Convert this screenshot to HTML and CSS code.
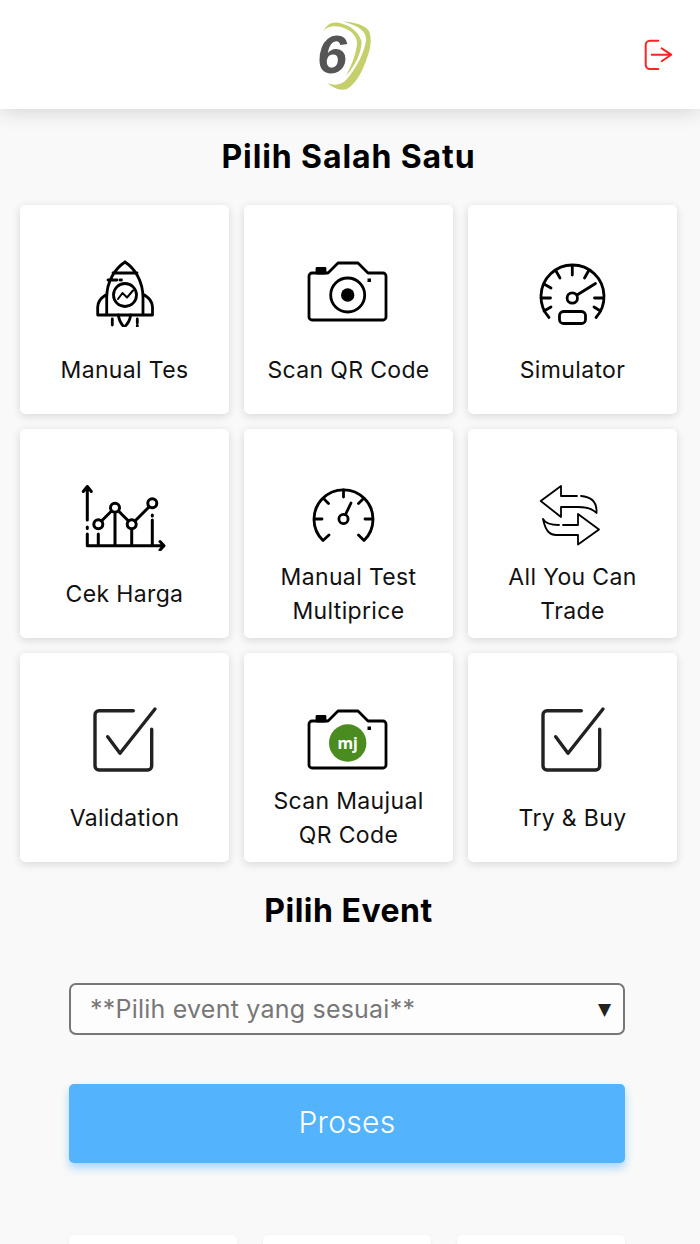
FILE: index.html
```html
<!DOCTYPE html>
<html lang="id">
<head>
<meta charset="utf-8">
<title>Pilih Salah Satu</title>
<link rel="stylesheet" href="styles.css">
</head>
<body>
<div class="app">
  <header class="topbar">
    <div class="logo">
      <svg class="logo-swoosh" viewBox="280 0 140 109" width="140" height="109">
        <path class="swoosh" d="M343 21.5C356 22 366 26 369 31C372 38 371 48 367 58C363 70 357 83 347 89C340 91 333 88 327.500 83C335 86 342 85 347 79C356 68 365 52 366 40C366.500 32 360 26 343 21.500Z"/>
        <path class="swoosh" d="M323 32C326 25 331 22 337 22.500C350 25 358 31 361.500 41C362 52 355 66 346 76C351 66 356 55 357 44C357.500 36 351 30 341 27C332 25 326 27 323 32Z"/>
      </svg>
      <span class="logo-six">6</span>
    </div>
    <svg class="logout" viewBox="640 36 38 40" width="38" height="40">
      <path d="M658.300 41.700H650A4.300 4.300 0 0 0 645.700 46V65.700A4.300 4.300 0 0 0 650 70H658.300M651.700 55.700H671M661.700 49.300L671.200 55.700L661.700 62.300"/>
    </svg>
  </header>

  <main class="content">
    <h1 class="title title-top">Pilih Salah Satu</h1>
    <div class="grid">
      <a class="card">
        <svg class="icon" viewBox="20 205 209 122">
          <g class="ln">
            <path d="M125 262C116 268 106.700 280 106.700 298V315M125 262C134 268 143 280 143 298V315M113 273H137M108 280H117M105.700 295C101 298 97.700 302 97.700 307V315H152.500V307C152.500 302 149 298 144.500 295"/>
            <circle cx="125" cy="295" r="11.500"/>
            <path d="M118 299L122.500 293L127 297.500L133 290.500" stroke-width="2"/>
            <path d="M118.300 315C119 320 121 324 124.300 327C127.700 324 130 320 130.700 315M112.300 319V325M137.300 319V323M137.300 325.500V327M120 280H121.500"/>
          </g>
        </svg>
        <span class="label">Manual Tes</span>
      </a>
      <a class="card">
        <svg class="icon" viewBox="244 205 209 122">
          <g class="ln">
            <path d="M312 273H328L338 263H358L368 273H383A3 3 0 0 1 386 276V317A3 3 0 0 1 383 320H312A3 3 0 0 1 309 317V276A3 3 0 0 1 312 273Z"/>
            <path class="fill" d="M317 268.500H325V273H317Z"/>
            <circle cx="347.700" cy="295" r="17"/>
          </g>
          <circle class="fill" cx="347.700" cy="295" r="6.700"/>
          <rect class="fill" x="367.500" y="278.500" width="3.500" height="3.500"/>
        </svg>
        <span class="label">Scan QR Code</span>
      </a>
      <a class="card">
        <svg class="icon" viewBox="468 205 209 122">
          <g class="ln">
            <path d="M549 317.500A31.500 31.500 0 1 1 596 317.500"/>
            <circle cx="572.300" cy="298" r="5.200"/>
            <path d="M577 295L595.500 283.500M572.300 266.500V275M556 271L560 278M588.500 271L584.500 278M544 284L551 288M541 298H550.500M603.500 298H594.500M544 311L551 307M600.500 311L594 307"/>
            <rect x="559.500" y="311.500" width="26" height="12" rx="4"/>
          </g>
        </svg>
        <span class="label">Simulator</span>
      </a>
      <a class="card">
        <svg class="icon" viewBox="20 429 209 122">
          <g class="ln heavy">
            <path d="M87.300 520V488M83.300 491.500L87.300 486.500L91.300 491.500M87.300 527V528.500M87.300 534V545.700H162M160 541.500L164 545.700L160 550M98.300 534V545.700M115 514V545.700M131.700 530V545.700M152.300 520V545.700M152.300 515V516"/>
            <path d="M101.500 521L111.500 511M118.500 511L128.500 521M135 521L149 507"/>
            <circle cx="98.300" cy="524.300" r="4.500"/>
            <circle cx="115" cy="507.700" r="4.500"/>
            <circle cx="131.700" cy="524.300" r="4.500"/>
            <circle cx="152.300" cy="503.300" r="4.500"/>
          </g>
        </svg>
        <span class="label">Cek Harga</span>
      </a>
      <a class="card">
        <svg class="icon" viewBox="244 429 209 122">
          <g class="ln">
            <path d="M329 535L323 540.500A29.500 29.500 0 1 1 364 540.500L358.500 535"/>
            <circle cx="343.500" cy="519" r="4.600"/>
            <path d="M345.500 514.500L351 503M343.500 490V497M323.500 498.500L328.500 503.500M363.500 498.500L358.500 503.500M314.500 519H322M372.500 519H365"/>
          </g>
        </svg>
        <span class="label">Manual Test Multiprice</span>
      </a>
      <a class="card">
        <svg class="icon" viewBox="468 429 209 122">
          <g class="ln thin">
            <path d="M577 496H561V486L540.700 501L561 517V507H578C586 507 592 508 596.500 513C597 505 594 497 581 496"/>
            <path d="M563 525H578V514L599 529.500L578 544.500V535H556C551 535 546 533 543 519C545 523 550 525 559 525"/>
          </g>
        </svg>
        <span class="label">All You Can Trade</span>
      </a>
      <a class="card">
        <svg class="icon" viewBox="20 653 209 122">
          <g class="ln check">
            <path d="M133.300 710.700H99A4 4 0 0 0 95 714.700V766A4 4 0 0 0 99 770H147.700A4 4 0 0 0 151.700 766V729.300"/>
            <path d="M107.700 736.700L120 753.300L155 709"/>
          </g>
        </svg>
        <span class="label">Validation</span>
      </a>
      <a class="card">
        <svg class="icon" viewBox="244 653 209 122">
          <g class="ln">
            <path d="M312 721H328L338 711H358L368 721H383A3 3 0 0 1 386 724V765A3 3 0 0 1 383 768H312A3 3 0 0 1 309 765V724A3 3 0 0 1 312 721Z"/>
            <path class="fill" d="M317 716.500H325V721H317Z"/>
          </g>
          <rect class="fill" x="367.500" y="726.500" width="3.500" height="3.500"/>
          <circle class="mj-disc" cx="347.700" cy="743" r="18.700"/>
          <text class="mj-text" x="347.700" y="749" text-anchor="middle">mj</text>
        </svg>
        <span class="label">Scan Maujual QR Code</span>
      </a>
      <a class="card">
        <svg class="icon" viewBox="468 653 209 122">
          <g class="ln check">
            <path d="M581.300 710.700H547A4 4 0 0 0 543 714.700V766A4 4 0 0 0 547 770H595.700A4 4 0 0 0 599.700 766V729.300"/>
            <path d="M555.700 736.700L568 753.300L603 709"/>
          </g>
        </svg>
        <span class="label">Try &amp; Buy</span>
      </a>
    </div>
    <h2 class="title title-event">Pilih Event</h2>
    <div class="form">
      <div class="select">
        <span class="select-text">**Pilih event yang sesuai**</span>
        <span class="select-arrow">▼</span>
      </div>
      <button class="submit" type="button">Proses</button>
      <div class="lower">
        <div class="lower-card"></div>
        <div class="lower-card"></div>
        <div class="lower-card"></div>
      </div>
    </div>
  </main>
</div>
</body>
</html>
```
FILE: styles.css
```css
* { box-sizing: border-box; }
html, body { margin: 0; height: 100%; }
body {
  background: #f9f9f9;
  font-family: "Inter", "Noto Sans", sans-serif;
  color: #000;
  overflow: hidden;
}
.app { height: 1244px; overflow: hidden; }

.topbar {
  height: 109px;
  background: #fff;
  box-shadow: 0 2px 20px rgba(0, 0, 0, 0.16);
  display: flex;
  justify-content: flex-end;
  align-items: center;
  padding-right: 22px;
  position: relative;
}
.logo { position: absolute; left: 280px; top: 0; width: 140px; height: 109px; }
.logo-swoosh { display: block; }
.swoosh { fill: #c5cf6c; }
.logo-six {
  position: absolute;
  left: 37px;
  top: 24px;
  font: italic 700 54px/60px "Liberation Sans", sans-serif;
  color: #555;
}
.logout { fill: none; stroke: #ff2222; stroke-width: 2; stroke-linecap: round; stroke-linejoin: round; }

.content { width: 657px; margin-left: 20px; }
.title {
  margin: 0;
  height: 44px;
  line-height: 46px;
  font-size: 32px;
  font-weight: 700;
  letter-spacing: 0.9px;
  text-align: center;
}
.title-top { margin-top: 25px; margin-bottom: 27px; }
.title-event { margin-top: 26px; letter-spacing: 0.5px; }

.grid { display: grid; grid-template-columns: repeat(3, 209px); grid-auto-rows: 209px; gap: 15px; }
.card {
  display: grid;
  grid-template-rows: 122px 1fr;
  background: #fff;
  border-radius: 5px;
  box-shadow: 0 2px 8px rgba(0, 0, 0, 0.14);
}
.icon { display: block; width: 209px; height: 122px; }
.ln { fill: none; stroke: #000; stroke-width: 2.800; stroke-linecap: round; stroke-linejoin: round; }
.ln.heavy { stroke-width: 3; }
.ln.thin { stroke-width: 1.800; }
.ln.check { stroke: #222; stroke-width: 3.400; }
.fill { fill: #000; }
.mj-disc { fill: #4a8c20; }
.mj-text { font: 700 16px "Noto Sans", sans-serif; fill: #fff; }
.label {
  align-self: center;
  text-align: center;
  font-size: 23px;
  line-height: 34px;
  letter-spacing: 0.35px;
  padding: 0 14px 2px;
  color: #111;
}

.form { width: 556px; margin: 51px 0 0 49px; }
.select {
  height: 52px;
  border: 2px solid #777;
  border-radius: 7px;
  background: #fdfdfd;
  display: flex;
  align-items: center;
  justify-content: space-between;
  padding: 0 12px 0 19px;
}
.select-text { font-size: 25px; letter-spacing: 0.22px; color: #777; }
.select-arrow { font: 17px "DejaVu Sans", sans-serif; color: #222; }
.submit {
  display: block;
  width: 100%;
  height: 79px;
  margin-top: 49px;
  padding: 0 0 3px;
  border: 0;
  border-radius: 5px;
  background: #54b3fd;
  color: #fff;
  font: 300 30px "Inter", sans-serif;
  letter-spacing: 0.3px;
  box-shadow: 0 5px 8px rgba(84, 179, 253, 0.5);
}
.lower { display: flex; gap: 26px; margin-top: 72px; }
.lower-card {
  width: 168px;
  height: 120px;
  background: #fff;
  border-radius: 5px;
  box-shadow: 0 1px 4px rgba(0, 0, 0, 0.06);
}
```
